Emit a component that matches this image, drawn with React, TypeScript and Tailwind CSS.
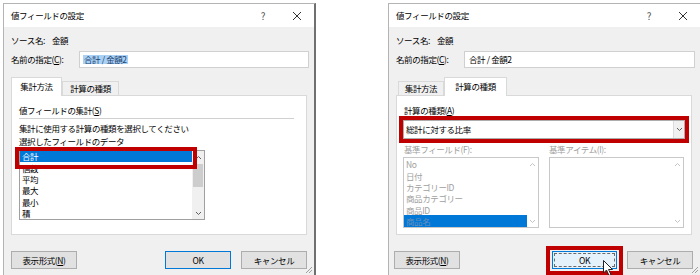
import type { ReactNode } from 'react';

function TitleBar() {
  return (
    <div className="flex h-[23px] shrink-0 items-center bg-white pl-[7px]">
      <span>値フィールドの設定</span>
      <span className="ml-auto flex w-[30px] justify-center text-[10px] text-[#555]">?</span>
      <span className="ml-[4px] mr-[2px] flex w-[30px] justify-center">
        <svg width="10" height="10" viewBox="0 0 10 10">
          <path d="M1 1L9 9M9 1L1 9" stroke="#333" strokeWidth="1" />
        </svg>
      </span>
    </div>
  );
}

function Btn({ children, focused = false }: { children: ReactNode; focused?: boolean }) {
  return (
    <div
      className={`flex h-[18px] w-[66px] items-center justify-center border ${
        focused ? 'border-[#0078d7] bg-[#e1e1e1]' : 'border-[#adadad] bg-[#e1e1e1]'
      }`}
    >
      {children}
    </div>
  );
}

function Grip() {
  return (
    <svg className="absolute bottom-[1px] right-[1px]" width="8" height="8" viewBox="0 0 8 8">
      <path d="M7 1L1 7M7 4L4 7" stroke="#a0a0a0" strokeWidth="1" />
    </svg>
  );
}

function Chevron({ up = false, color = '#606060' }: { up?: boolean; color?: string }) {
  return (
    <svg width="7" height="5" viewBox="0 0 7 5">
      <path d={up ? 'M1 4L3.5 1.5L6 4' : 'M1 1L3.5 3.5L6 1'} stroke={color} strokeWidth="1" fill="none" />
    </svg>
  );
}

function Tabs({ active }: { active: 0 | 1 }) {
  const tab = (label: string, on: boolean, w: string) =>
    on ? (
      <div className={`relative z-10 -mb-px flex h-[19px] ${w} items-center justify-center border border-b-0 border-[#d9d9d9] bg-white pb-[1px]`}>
        {label}
      </div>
    ) : (
      <div className={`flex h-[14px] ${w} items-center justify-center border border-b-0 border-[#d9d9d9] bg-[#f0f0f0]`}>
        {label}
      </div>
    );
  return (
    <div className="mt-[9px] flex h-[18px] items-end">
      {active === 0 ? (
        <>
          {tab('集計方法', true, 'w-[51px]')}
          {tab('計算の種類', false, 'w-[57px]')}
        </>
      ) : (
        <>
          <div className="ml-[2px]" />
          {tab('集計方法', false, 'w-[46px]')}
          {tab('計算の種類', true, 'w-[63px]')}
        </>
      )}
    </div>
  );
}

function Header({ selected }: { selected: boolean }) {
  return (
    <>
      <div className="mt-[6px] flex h-[14px] items-center">
        <span className="w-[41px]">ソース名:</span>
        <span>金額</span>
      </div>
      <div className="-mr-[2px] mt-[4px] flex h-[17px] items-center">
        <span className="w-[68px]">
          名前の指定(<span className="underline">C</span>):
        </span>
        <div className="flex h-[17px] flex-1 items-center border border-[#d0d0d0] bg-white pl-[3px]">
          <span className={selected ? 'bg-[#a9d1f5] px-[1px] text-[#1d3f6e]' : 'px-[1px]'}>合計 / 金額2</span>
        </div>
      </div>
    </>
  );
}

function LeftDialog() {
  const items = ['合計', '個数', '平均', '最大', '最小', '積'];
  return (
    <div className="relative ml-[3px] flex h-[272px] w-[313px] shrink-0 flex-col border-l border-t border-r-2 border-[#b4b4b4] border-r-[#707070]">
      <TitleBar />
      <div className="flex flex-1 flex-col bg-[#f0f0f0] px-[7px]">
        <Header selected />
        <Tabs active={0} />
        <div className="flex h-[140px] flex-col border border-[#d9d9d9] bg-white px-[7px] pt-[8px]">
          <div className="flex h-[12px] items-center">
            値フィールドの集計(<span className="underline">S</span>)
          </div>
          <div className="mr-[5px] mt-[2px] h-px bg-[#d0d0d0]" />
          <div className="mt-[3px] flex h-[12px] items-center">集計に使用する計算の種類を選択してください</div>
          <div className="mt-[1px] flex h-[12px] items-center">選択したフィールドのデータ</div>
          <div className="relative mt-[3px] flex h-[70px] w-[186px] border border-[#a0a0a0] bg-white">
            <div className="flex flex-1 flex-col">
              {items.map((it, i) => (
                <div
                  key={it}
                  className={`flex h-[11.3px] items-center pl-[2px] ${i === 0 ? 'bg-[#0078d7] text-white' : ''}`}
                >
                  {it}
                </div>
              ))}
            </div>
            <div className="flex w-[12px] flex-col items-center bg-[#f0f0f0]">
              <div className="flex h-[12px] items-center">
                <Chevron up />
              </div>
              <div className="mt-[1px] h-[23px] w-[10px] bg-[#cdcdcd]" />
              <div className="mt-auto flex h-[12px] items-center">
                <Chevron />
              </div>
            </div>
            <div className="absolute left-[-5px] top-[-4px] h-[22px] w-[182px] border-4 border-[#c00000]" />
          </div>
        </div>
        <div className="mt-[16px] flex items-center">
          <Btn>
            表示形式(<span className="underline">N</span>)
          </Btn>
          <div className="ml-auto flex gap-[10px]">
            <Btn focused>OK</Btn>
            <Btn>キャンセル</Btn>
          </div>
        </div>
      </div>
      <Grip />
    </div>
  );
}

function RightDialog() {
  const fields = ['No', '日付', 'カテゴリーID', '商品カテゴリー', '商品ID', '商品名'];
  return (
    <div className="relative ml-[72px] flex h-[272px] w-[312px] shrink-0 flex-col border-l border-t border-[#b4b4b4]">
      <TitleBar />
      <div className="flex flex-1 flex-col bg-[#f0f0f0] px-[7px]">
        <Header selected={false} />
        <Tabs active={1} />
        <div className="mr-[1px] flex h-[140px] flex-col border border-[#d9d9d9] bg-white px-[7px] pt-[8px]">
          <div className="flex h-[12px] items-center">
            計算の種類(<span className="underline">A</span>)
          </div>
          <div className="-mx-[5px] border-4 border-[#c00000]">
            <div className="flex h-[19px] items-center border border-[#adadad] bg-white pl-[2px]">
              <span>総計に対する比率</span>
              <div className="ml-auto flex h-full w-[11px] items-center justify-center border-l border-[#dcdcdc] bg-[#f0f0f0]">
                <Chevron />
              </div>
            </div>
          </div>
          <div className="-ml-[1px] flex gap-[10px] text-[#a0a0a0]">
            <div className="flex w-[137px] flex-col">
              <div className="flex h-[12px] items-center pl-[1px]">基準フィールド(F):</div>
              <div className="mt-[2px] flex h-[71px] border border-[#c8c8c8] bg-white">
                <div className="flex flex-1 flex-col pt-[1px]">
                  {fields.map((f, i) => (
                    <div
                      key={f}
                      className={`flex h-[11.3px] items-center pl-[2px] ${i === 5 ? 'bg-[#0078d7] text-[#6a8fb9]' : ''}`}
                    >
                      {f}
                    </div>
                  ))}
                </div>
                <div className="flex w-[11px] flex-col items-center">
                  <div className="flex h-[12px] items-center">
                    <Chevron up color="#c4c4c4" />
                  </div>
                  <div className="mt-auto flex h-[12px] items-center">
                    <Chevron color="#c4c4c4" />
                  </div>
                </div>
              </div>
            </div>
            <div className="flex w-[136px] flex-col">
              <div className="flex h-[12px] items-center">基準アイテム(I):</div>
              <div className="mt-[2px] flex h-[71px] justify-end border border-[#c8c8c8] bg-white">
                <div className="flex w-[11px] flex-col items-center">
                  <div className="flex h-[12px] items-center">
                    <Chevron up color="#c4c4c4" />
                  </div>
                  <div className="mt-auto flex h-[12px] items-center">
                    <Chevron color="#c4c4c4" />
                  </div>
                </div>
              </div>
            </div>
          </div>
        </div>
        <div className="mt-[11px] flex items-start">
          <div className="-ml-[2px] mt-[5px]">
            <Btn>
              表示形式(<span className="underline">N</span>)
            </Btn>
          </div>
          <div className="relative ml-auto flex h-[29px] w-[77px] justify-center border-4 border-[#c00000] pt-[1px]">
            <div className="flex h-[18px] w-[65px] items-center justify-center border border-[#0078d7] bg-[#e5f1fb]">
              <div className="flex h-[14px] w-[61px] items-center justify-center border border-dashed border-[#6a6a6a]">
                OK
              </div>
            </div>
            <svg className="absolute left-[53px] top-[10px]" width="11" height="17" viewBox="0 0 11 17">
              <path d="M0.5 0.5L0.5 13L3.5 10L6 15.5L8 14.5L5.5 9.5L9.5 9.5Z" fill="white" stroke="#222" strokeWidth="1" />
            </svg>
          </div>
          <div className="ml-[4px] mt-[5px]">
            <Btn>キャンセル</Btn>
          </div>
        </div>
      </div>
      <Grip />
    </div>
  );
}

export default function App() {
  return (
    <div className="flex h-[275px] w-[700px] overflow-hidden bg-white pt-[3px] font-['Noto_Sans_CJK_JP','Liberation_Sans',sans-serif] text-[8.5px] leading-none tracking-[-0.4px] text-black">
      <LeftDialog />
      <RightDialog />
    </div>
  );
}
